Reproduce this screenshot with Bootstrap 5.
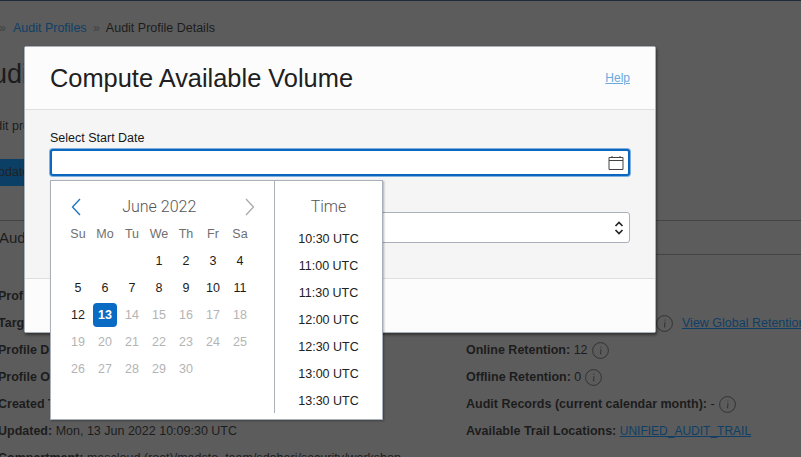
<!DOCTYPE html>
<html lang="en">
<head>
    <meta charset="UTF-8">
    <title>Compute Available Volume</title>
    <link href="https://cdn.jsdelivr.net/npm/bootstrap@5.3.0/dist/css/bootstrap.min.css" rel="stylesheet">
    <style>
        html, body {
            height: 100%;
            overflow: hidden;
        }

        body {
            background: #5c5c5c;
            color: #1c1c1c;
            font-family: "Liberation Sans", Arial, sans-serif;
            font-size: 12.5px;
        }

        .top-bar {
            height: 1px;
            background: #1e2a3c;
        }

        /* page behind the dialog */
        .page-crumbs {
            height: 55px;
            padding-top: 19px;
            line-height: 16px;
            white-space: nowrap;
            margin-left: -4px;
        }

        .page-crumbs a {
            color: #0f3f66;
            text-decoration: none;
            margin-left: 4px;
        }

        .crumb-sep {
            color: #3f3f3f;
            margin: 0 3px;
        }

        .page-title {
            font-size: 27px;
            line-height: 36px;
            margin: 0 0 0 -26px;
            height: 62px;
            font-weight: 400;
            white-space: nowrap;
        }

        .page-sub {
            margin: 0 0 0 -20px;
            height: 41px;
            line-height: 16px;
            white-space: nowrap;
        }

        .page-btn {
            width: 60px;
            height: 27px;
            margin-left: -36px;
            background: #0b3f66;
            color: #222;
            line-height: 27px;
            padding-left: 25px;
        }

        .page-rule {
            border-top: 1px solid #444;
            height: 0;
            margin-top: 34px;
        }

        .page-section {
            height: 62px;
            padding-top: 6px;
        }

        .page-section span {
            font-size: 15px;
            margin-left: -1px;
        }

        .right-rule {
            position: absolute;
            left: 656px;
            right: 0;
            top: 254px;
            border-top: 1px solid #444;
        }

        .info-cols {
            margin-left: -2px;
        }

        .info-left {
            width: 468px;
            flex: none;
        }

        .info-line {
            height: 27px;
            line-height: 27px;
            white-space: nowrap;
            display: flex;
            align-items: center;
            gap: 4px;
        }

        .info-line a {
            color: #0f3f66;
        }

        .info-line a.trail-link {
            font-size: 12px;
        }

        .info-ico {
            width: 17px;
            height: 17px;
            flex: none;
        }

        .hidden-run {
            width: 185.5px;
            flex: none;
        }

        .retention-link {
            margin-left: 5.5px;
        }

        /* dialog */
        .vol-dialog {
            position: absolute;
            left: 24px;
            top: 46px;
            width: 632px;
            height: 287px;
            background: #f5f5f6;
            border: 1px solid #a9b0ba;
            border-radius: 2px;
            box-shadow: 1px 2px 3px rgba(0, 0, 0, .45);
        }

        .vol-head {
            height: 63px;
            background: #fcfcfc;
            border-bottom: 1px solid #dfdfe1;
            padding: 0 25px;
        }

        .vol-head h1 {
            font-size: 25.4px;
            font-weight: 400;
            margin: 0;
            color: #202020;
        }

        .vol-head a {
            color: #6aa9dc;
            font-size: 12px;
        }

        .vol-body {
            height: 168px;
            padding: 21px 25px 0;
        }

        .vol-label {
            font-size: 12.5px;
            line-height: 15px;
            height: 18px;
            color: #161616;
        }

        .date-box {
            height: 27px;
            background: #fff;
            border: 2px solid #0b66bd;
            border-radius: 3px;
            box-shadow: 0 0 0 1px #7fb0e0;
            padding-right: 4px;
        }

        .plain-select {
            height: 31px;
            margin-top: 36px;
            background: #fff;
            border: 1px solid #a9b0ba;
            border-radius: 3px;
            padding-right: 5px;
        }

        .vol-foot {
            height: 54px;
            background: #fcfcfc;
            border-top: 1px solid #dfdfe1;
        }

        /* date picker popup */
        .pick-pop {
            position: absolute;
            left: 50px;
            top: 180px;
            width: 333px;
            height: 240px;
            background: #fff;
            border: 1px solid #a9b0ba;
            box-shadow: 1px 1px 2px rgba(0, 0, 0, .3);
        }

        .pick-cal {
            width: 224px;
            flex: none;
            height: 232px;
            border-right: 1px solid #a9b0ba;
            padding-left: 13.5px;
        }

        .pick-nav {
            height: 38px;
            padding: 13px 5px 0 6.5px;
            width: 196px;
        }

        .pick-title {
            font-family: Roboto, "Liberation Sans", sans-serif;
            font-weight: 300;
            font-size: 16px;
            color: #555;
            line-height: 26px;
        }

        .pick-nav .pick-title {
            margin-right: 8px;
            padding-top: 1px;
        }

        .pick-grid {
            display: grid;
            grid-template-columns: repeat(7, 27px);
            grid-auto-rows: 27px;
            text-align: center;
            line-height: 27px;
            margin-top: 2px;
        }

        .pick-head {
            color: #6f6f6f;
        }

        .pick-off {
            color: #b4b4b4;
        }

        .pick-on {
            color: #fff;
            font-weight: 700;
            background: #0a6bc4;
            border-radius: 4px;
            width: 24px;
            height: 24px;
            line-height: 24px;
            margin: 1px 0 0 1.5px;
        }

        .pick-time {
            flex: 1;
            text-align: center;
        }

        .pick-time .pick-title {
            padding-top: 13px;
            height: 45px;
        }

        .time-row {
            height: 27px;
            line-height: 27px;
            color: #222;
        }
    </style>
</head>
<body class="position-relative">
    <div class="top-bar"></div>
    <div class="page-crumbs">
        <span class="crumb-sep">»</span><a href="#">Audit Profiles</a>
        <span class="crumb-sep">»</span> <span>Audit Profile Details</span>
    </div>
    <h2 class="page-title">Audit Profile</h2>
    <p class="page-sub">Audit profile details</p>
    <div class="page-btn">Update</div>
    <div class="page-rule"></div>
    <div class="page-section"><span>Audit Profile</span></div>

    <div class="d-flex info-cols">
        <div class="info-left">
            <div class="info-line"><b>Profile Name</b></div>
            <div class="info-line"><b>Target</b></div>
            <div class="info-line"><b>Profile Description</b></div>
            <div class="info-line"><b>Profile Owner</b></div>
            <div class="info-line"><b>Created Time</b></div>
            <div class="info-line"><span><b>Updated:</b> Mon, 13 Jun 2022 10:09:30 UTC</span></div>
            <div class="info-line"><span><b>Compartment:</b> mascloud (root)/madsto_team/sdoberi/security/workshop</span></div>
        </div>
        <div>
            <div class="info-line"><b>Audit Collection</b></div>
            <div class="info-line">
                <span class="hidden-run"></span>
                <svg class="info-ico" viewBox="0 0 17 17"><circle cx="8.5" cy="8.5" r="7.9" fill="none" stroke="#333"/><path d="M8.9 4.6v1M8.5 7.4h.6l-.7 4.6h.9" fill="none" stroke="#333"/></svg>
                <a href="#" class="retention-link">View Global Retention Settings</a>
            </div>
            <div class="info-line"><span><b>Online Retention:</b> 12</span><svg class="info-ico" viewBox="0 0 17 17"><circle cx="8.5" cy="8.5" r="7.9" fill="none" stroke="#333"/><path d="M8.9 4.6v1M8.5 7.4h.6l-.7 4.6h.9" fill="none" stroke="#333"/></svg></div>
            <div class="info-line"><span><b>Offline Retention:</b> 0</span><svg class="info-ico" viewBox="0 0 17 17"><circle cx="8.5" cy="8.5" r="7.9" fill="none" stroke="#333"/><path d="M8.9 4.6v1M8.5 7.4h.6l-.7 4.6h.9" fill="none" stroke="#333"/></svg></div>
            <div class="info-line"><span><b>Audit Records (current calendar month):</b> -</span><svg class="info-ico" viewBox="0 0 17 17"><circle cx="8.5" cy="8.5" r="7.9" fill="none" stroke="#333"/><path d="M8.9 4.6v1M8.5 7.4h.6l-.7 4.6h.9" fill="none" stroke="#333"/></svg></div>
            <div class="info-line"><span><b>Available Trail Locations:</b> <a href="#" class="trail-link">UNIFIED_AUDIT_TRAIL</a></span></div>
        </div>
    </div>
    <div class="right-rule"></div>

    <div class="vol-dialog">
        <div class="vol-head d-flex align-items-center justify-content-between">
            <h1>Compute Available Volume</h1>
            <a href="#">Help</a>
        </div>
        <div class="vol-body">
            <div class="vol-label">Select Start Date</div>
            <div class="date-box d-flex align-items-center justify-content-end">
                <svg width="16" height="15" viewBox="0 0 16 15"><path d="M1 2.5h14v12H1zM1 5.5h14M4 1v2M12 1v2" fill="none" stroke="#444"/></svg>
            </div>
            <div class="plain-select d-flex align-items-center justify-content-end">
                <svg width="10" height="16" viewBox="0 0 10 16"><path d="M1.5 6l3.5-3.5L8.5 6M1.5 10l3.5 3.5L8.5 10" fill="none" stroke="#222" stroke-width="1.6"/></svg>
            </div>
        </div>
        <div class="vol-foot"></div>
    </div>

    <div class="pick-pop d-flex">
        <div class="pick-cal">
            <div class="pick-nav d-flex align-items-center justify-content-between">
                <svg width="10" height="18" viewBox="0 0 10 18"><path d="M9 1L1.5 9 9 17" fill="none" stroke="#1a73c4" stroke-width="1.3"/></svg>
                <span class="pick-title">June 2022</span>
                <svg width="10" height="18" viewBox="0 0 10 18"><path d="M1 1l7.5 8L1 17" fill="none" stroke="#aaa" stroke-width="1.3"/></svg>
            </div>
            <div class="pick-grid">
                <div class="pick-head">Su</div><div class="pick-head">Mo</div><div class="pick-head">Tu</div><div class="pick-head">We</div><div class="pick-head">Th</div><div class="pick-head">Fr</div><div class="pick-head">Sa</div>
                <div></div><div></div><div></div><div>1</div><div>2</div><div>3</div><div>4</div>
                <div>5</div><div>6</div><div>7</div><div>8</div><div>9</div><div>10</div><div>11</div>
                <div>12</div><div class="pick-on">13</div><div class="pick-off">14</div><div class="pick-off">15</div><div class="pick-off">16</div><div class="pick-off">17</div><div class="pick-off">18</div>
                <div class="pick-off">19</div><div class="pick-off">20</div><div class="pick-off">21</div><div class="pick-off">22</div><div class="pick-off">23</div><div class="pick-off">24</div><div class="pick-off">25</div>
                <div class="pick-off">26</div><div class="pick-off">27</div><div class="pick-off">28</div><div class="pick-off">29</div><div class="pick-off">30</div>
            </div>
        </div>
        <div class="pick-time">
            <div class="pick-title">Time</div>
            <div class="time-row">10:30 UTC</div>
            <div class="time-row">11:00 UTC</div>
            <div class="time-row">11:30 UTC</div>
            <div class="time-row">12:00 UTC</div>
            <div class="time-row">12:30 UTC</div>
            <div class="time-row">13:00 UTC</div>
            <div class="time-row">13:30 UTC</div>
        </div>
    </div>

    <script src="https://cdn.jsdelivr.net/npm/bootstrap@5.3.0/dist/js/bootstrap.bundle.min.js"></script>
</body>
</html>
